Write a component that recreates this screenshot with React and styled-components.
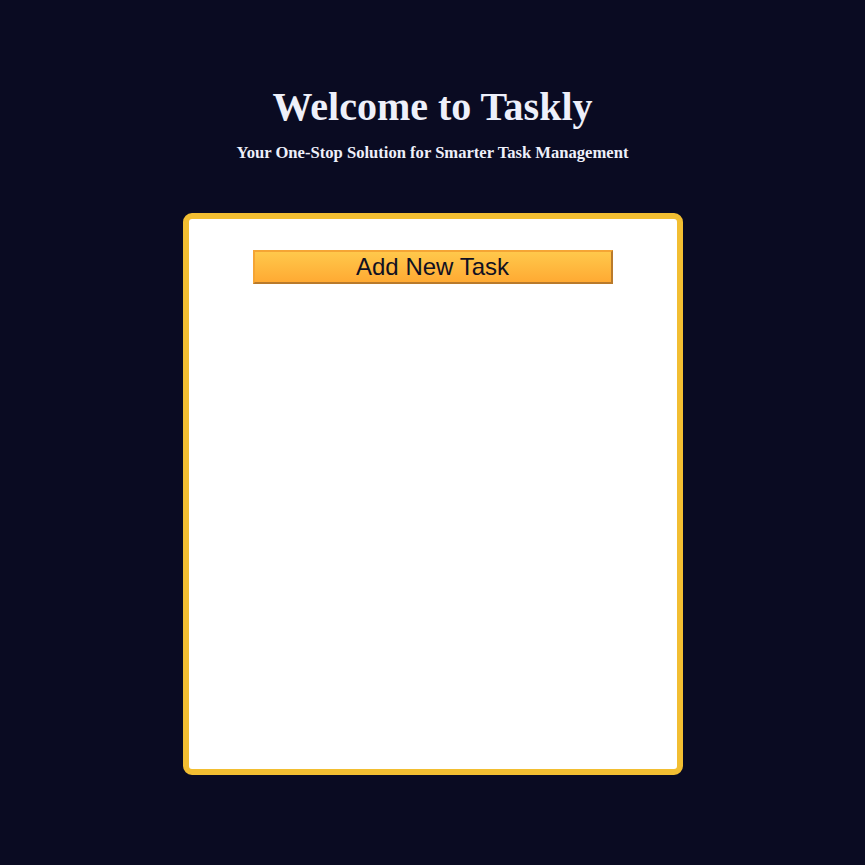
import styled, { createGlobalStyle } from "styled-components"

const Global = createGlobalStyle`
  html, body {
    margin: 0;
    padding: 0;
    background-color: #0a0b22;
  }
`

const Page = styled.div`
  width: 100%;
  min-height: 865px;
  display: flex;
  flex-direction: column;
  align-items: center;
  background-color: #0a0b22;
  font-family: "Liberation Serif", "Times New Roman", serif;
  color: #eef0fa;
`

const Header = styled.header`
  display: flex;
  flex-direction: column;
  align-items: center;
  padding-top: 84px;
`

const Title = styled.h1`
  margin: 0;
  font-size: 40px;
  font-weight: 700;
  line-height: 46px;
`

const Subtitle = styled.h3`
  margin: 14px 0 0;
  font-size: 16.6px;
  font-weight: 700;
  line-height: 18px;
`

const Card = styled.main`
  box-sizing: border-box;
  margin-top: 51px;
  width: 500px;
  height: 562px;
  border: 6px solid #f2be32;
  border-radius: 9px;
  background: #ffffff;
  display: flex;
  flex-direction: column;
  align-items: center;
  padding-top: 31px;
`

const AddButton = styled.button`
  box-sizing: border-box;
  width: 360px;
  height: 34px;
  padding: 0;
  border: 2px solid;
  border-color: #f5a534 #b97a2b #b97a2b #f5a534;
  background: linear-gradient(to bottom, #ffc84b, #ffaa33);
  color: #111122;
  font-family: "Liberation Sans", Arial, sans-serif;
  font-size: 24px;
  line-height: 28px;
  cursor: pointer;
`

export default function App() {
  return (
    <>
      <Global />
      <Page>
        <Header>
          <Title>Welcome to Taskly</Title>
          <Subtitle>Your One-Stop Solution for Smarter Task Management</Subtitle>
        </Header>
        <Card>
          <AddButton>Add New Task</AddButton>
        </Card>
      </Page>
    </>
  )
}
